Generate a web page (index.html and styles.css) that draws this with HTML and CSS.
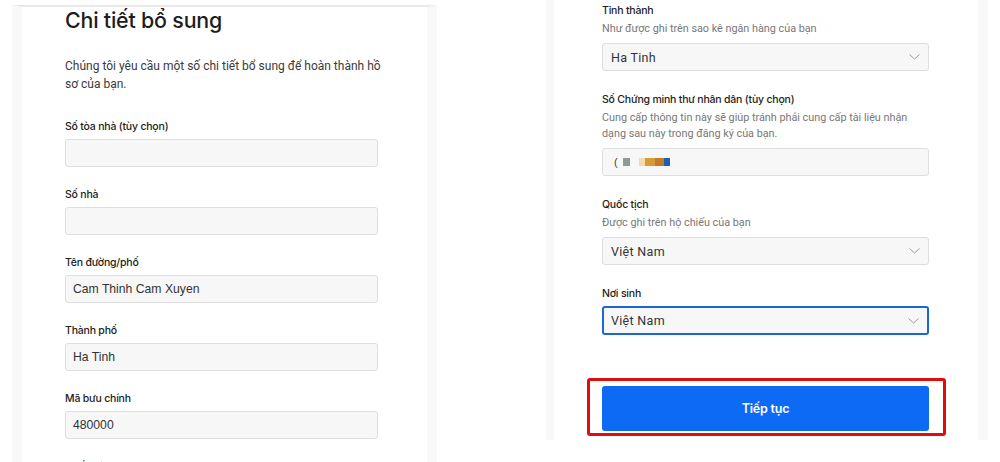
FILE: index.html
```html
<!DOCTYPE html>
<html lang="vi">
<head>
<meta charset="utf-8">
<title>Chi tiết bổ sung</title>
<link rel="stylesheet" href="styles.css">
</head>
<body>
<div class="page">
  <section class="panel panel-left">
    <h1 class="title">Chi tiết bổ sung</h1>
    <p class="desc">Chúng tôi yêu cầu một số chi tiết bổ sung để hoàn thành hồ sơ của bạn.</p>
    <div class="field">
      <label class="label">Số tòa nhà (tùy chọn)</label>
      <div class="input"></div>
    </div>
    <div class="field">
      <label class="label">Số nhà</label>
      <div class="input"></div>
    </div>
    <div class="field">
      <label class="label">Tên đường/phố</label>
      <div class="input">Cam Thinh Cam Xuyen</div>
    </div>
    <div class="field">
      <label class="label">Thành phố</label>
      <div class="input">Ha Tinh</div>
    </div>
    <div class="field">
      <label class="label">Mã bưu chính</label>
      <div class="input">480000</div>
    </div>
    <div class="field">
      <label class="label">Quốc gia</label>
    </div>
  </section>

  <section class="panel panel-right">
    <div class="rfield">
      <label class="label">Tỉnh thành</label>
      <p class="help">Như được ghi trên sao kê ngân hàng của bạn</p>
      <div class="input select"><span>Ha Tinh</span><svg class="chev" width="11" height="6" viewBox="0 0 11 6"><path d="M0.5 0.5 L5.5 5 L10.5 0.5" fill="none" stroke="#999" stroke-width="1"/></svg></div>
    </div>
    <div class="rfield">
      <label class="label">Số Chứng minh thư nhân dân (tùy chọn)</label>
      <p class="help">Cung cấp thông tin này sẽ giúp tránh phải cung cấp tài liệu nhận dạng sau này trong đăng ký của bạn.</p>
      <div class="input pix">
        <span class="paren">(</span>
        <span class="blk b1"></span><span class="blk b2"></span><span class="blk b3"></span><span class="blk b4"></span><span class="blk b6"></span>
      </div>
    </div>
    <div class="rfield">
      <label class="label">Quốc tịch</label>
      <p class="help">Được ghi trên hộ chiếu của bạn</p>
      <div class="input select"><span>Việt Nam</span><svg class="chev" width="11" height="6" viewBox="0 0 11 6"><path d="M0.5 0.5 L5.5 5 L10.5 0.5" fill="none" stroke="#999" stroke-width="1"/></svg></div>
    </div>
    <div class="rfield">
      <label class="label label-tight">Nơi sinh</label>
      <div class="input select focused"><span>Việt Nam</span><svg class="chev" width="11" height="6" viewBox="0 0 11 6"><path d="M0.5 0.5 L5.5 5 L10.5 0.5" fill="none" stroke="#999" stroke-width="1"/></svg></div>
    </div>
    <div class="btn-wrap">
      <button class="btn">Tiếp tục</button>
      <span class="highlight"></span>
    </div>
  </section>
</div>
</body>
</html>
```

FILE: styles.css
```css
* { box-sizing: border-box; }

html, body {
  margin: 0;
  padding: 0;
  background: #ffffff;
}

body {
  width: 1000px;
  height: 462px;
  overflow: hidden;
  font-family: "Roboto", "Liberation Sans", sans-serif;
  color: #222;
}

.page {
  display: flex;
  align-items: flex-start;
}

.panel {
  background: #fff;
}

.panel-left {
  margin-left: 12px;
  margin-top: 5px;
  width: 425px;
  height: 470px;
  border-top: 2px solid #e9e9e9;
  border-left: 10px solid #f8f8f8;
  border-right: 10px solid #f8f8f8;
  padding-left: 43px;
}

.title {
  margin: 0;
  font-family: "Inter", "Liberation Sans", sans-serif;
  font-weight: 500;
  font-size: 21.4px;
  line-height: 26px;
  letter-spacing: -0.2px;
  color: #1d1d1d;
}

.desc {
  margin: 24px 0 0;
  width: 318px;
  font-size: 12px;
  line-height: 18px;
  color: #3a3a3a;
}

.field {
  width: 313px;
  margin-top: 26px;
}
.field + .field { margin-top: 20px; }

.label {
  display: block;
  font-family: "Inter", "Liberation Sans", sans-serif;
  font-weight: 500;
  font-size: 10.5px;
  line-height: 16px;
  letter-spacing: -0.2px;
  color: #222;
  margin-bottom: 4px;
}

.input {
  height: 28px;
  background: #f7f7f7;
  border: 1px solid #dedede;
  border-radius: 3px;
  padding: 0 7px;
  display: flex;
  align-items: center;
  font-family: "Liberation Sans", "Arial", sans-serif;
  font-size: 12.2px;
  letter-spacing: 0;
  color: #333;
}

/* right panel */
.panel-right {
  margin-left: 109px;
  width: 442px;
  height: 440px;
  border-left: 8px solid #f8f8f8;
  border-right: 10px solid #f8f8f8;
  padding: 3px 0 0 48px;
}

.rfield {
  width: 327px;
}
.rfield + .rfield { margin-top: 21px; }

.rfield .label {
  font-size: 10.5px;
  margin-bottom: 2px;
}
.rfield .label-tight { margin-bottom: 4px; }

.help {
  margin: 0 0 6px;
  font-size: 10.8px;
  line-height: 16px;
  color: #777;
}

.select {
  justify-content: space-between;
  padding: 0 8px 0 8px;
  font-family: "Roboto", "Liberation Sans", sans-serif;
  font-size: 12.5px;
  letter-spacing: 0.3px;
}

.focused {
  border: 2px solid #1b66d6;
  padding-left: 7px;
  height: 29px;
}

.pix {
  padding-left: 11px;
}
.paren {
  font-size: 11px;
  margin-right: 5px;
  color: #444;
}
.blk {
  display: inline-block;
  height: 8px;
}
.b1 { width: 7px; background: #8e9a94; margin-right: 9px; }
.b2 { width: 6px; background: #f4dbb2; }
.b3 { width: 10px; background: #d99a3a; }
.b4 { width: 9px; background: #c27b28; }
.b6 { width: 6px; background: #1f5fae; }

.btn-wrap {
  position: relative;
  margin-top: 51px;
  width: 327px;
}

.btn {
  display: block;
  width: 327px;
  height: 45px;
  border: none;
  border-radius: 3px;
  background: #0d6af5;
  color: #fff;
  font-family: "Inter", "Liberation Sans", sans-serif;
  font-weight: 600;
  font-size: 12.5px;
  letter-spacing: -0.2px;
}

.highlight {
  position: absolute;
  left: -15px;
  top: -8px;
  width: 359px;
  height: 58px;
  border: 3px solid #e00d0d;
  border-radius: 3px;
}
```
